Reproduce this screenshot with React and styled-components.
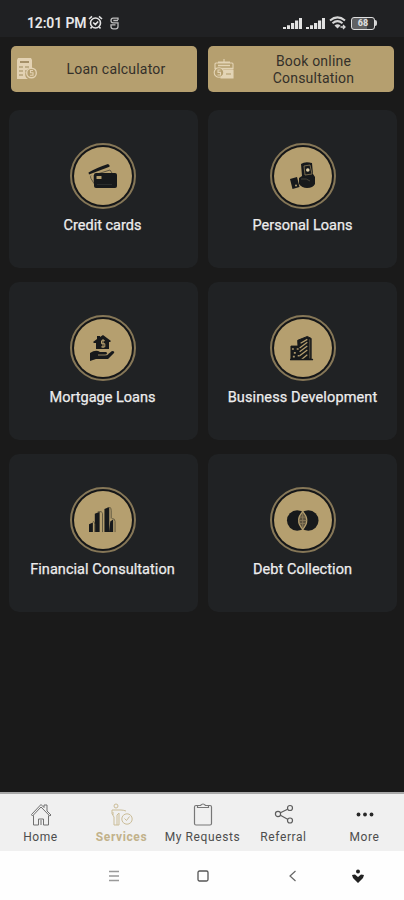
import React from "react";
import styled, { createGlobalStyle } from "styled-components";

const gold = "#b59f6f";
const ink = "#17191b";

const GlobalStyle = createGlobalStyle`
  * { box-sizing: border-box; }
  body { margin: 0; background: #1a1a1a; font-family: Roboto, "Liberation Sans", sans-serif; }
  svg { display: block; flex: none; }
`;
const Screen = styled.div`
  width: 404px; height: 900px; display: flex; flex-direction: column;
  overflow: hidden; background: #1a1a1a;
`;
const StatusBar = styled.header`
  height: 37px; flex: none; display: flex; align-items: center; justify-content: space-between;
  padding: 9px 27px 0 27px; background: #202123; color: #e8e8e8;
`;
const StatusGroup = styled.div`
  display: flex; align-items: center; gap: ${(p) => p.$gap}px;
`;
const Clock = styled.span`
  font-size: 14px; line-height: 18px; font-weight: 600; letter-spacing: -0.15px; white-space: nowrap;
`;
const GlyphSlot = styled.span`
  margin-left: 5px;
`;
const Actions = styled.div`
  display: grid; grid-template-columns: 186px 186px; gap: 11px; padding: 9px 0 0 11px;
`;
const ActionButton = styled.button`
  height: 46px; border: 0; border-radius: 5px; background: ${gold}; color: #34302a;
  display: flex; align-items: center; padding: 0 7px 0 5px; font-family: inherit;
`;
const ActionText = styled.span`
  flex: 1; text-align: center; font-size: 14px; line-height: 17px; letter-spacing: 0.2px;
  padding: 1px 0 0 5px;
`;
const Services = styled.main`
  flex: 1; display: grid; grid-template-columns: 189px 189px; grid-auto-rows: 158px;
  gap: 14px 10px; padding: 18px 0 0 9px; align-content: start;
`;
const Card = styled.section`
  border-radius: 10px; background: #202224; display: flex; flex-direction: column;
  align-items: center; padding: 33px 2px 0 0;
  &:nth-child(even) { padding-right: 0; }
`;
const Medallion = styled.div`
  width: 66px; height: 66px; border: 2px solid #867757; border-radius: 50%;
  display: grid; place-items: center;
`;
const Disc = styled.div`
  width: 58px; height: 58px; border-radius: 50%; background: ${gold};
  display: grid; place-items: center; box-shadow: 0 0 0 1.5px #151617;
`;
const CardTitle = styled.h2`
  margin: 7px 0 0; color: #ededed; font-size: 14.5px; line-height: 20px; font-weight: 400;
  letter-spacing: ${(p) => p.$tracking}px; white-space: nowrap; -webkit-text-stroke: 0.25px #ededed;
`;
const NavBar = styled.nav`
  height: 59px; flex: none; border-top: 2px solid #a9a9a9; background: #f0f0f0;
  display: grid; grid-template-columns: repeat(5, 81px); justify-content: center;
`;
const NavItem = styled.a`
  display: flex; flex-direction: column; align-items: center; padding: 9px 0 0 1px;
  color: ${(p) => (p.$active ? "#c2b28b" : "#4d4d4d")};
`;
const NavLabel = styled.span`
  font-size: 12px; line-height: 16px; margin-top: 3px; letter-spacing: 0.6px; white-space: nowrap;
  font-weight: ${(p) => (p.$active ? 700 : 400)};
`;
const SystemBar = styled.footer`
  height: 49px; flex: none; background: #fefefe; display: flex; align-items: center;
  padding: 1px 0 0 107px;
`;
const SystemButton = styled.span`
  width: 14px; display: grid; place-items: center; margin-right: ${(p) => p.$after}px;
`;

const Alarm = () => (
  <svg width="15" height="16" viewBox="0 0 15 16" fill="none" stroke="#e5e5e5" strokeWidth="1.6">
    <circle cx="7.5" cy="8" r="5" /><path d="M1 4 4 1.3M11 1.3 14 4M5.2 7.5l2.2 2 2.7-3M3.7 12 2.5 13.5M11.3 12l1.2 1.5" />
  </svg>
);
const StatusGlyph = () => (
  <svg width="9" height="13" viewBox="0 0 9 13" fill="none" stroke="#bdbdbd" strokeWidth="1.3">
    <path d="M8 3V1.2H3.2Q1 1.2 1 3.5T3.2 5.8H8V9.5Q8 11.8 5.7 11.8H3.3Q1 11.8 1 9.5V7.8h4.5M3.3 3.5H8" />
  </svg>
);
const Signal = () => (
  <svg width="20" height="13" viewBox="0 0 20 13" fill="#e2e2e2">
    <path d="M0 10h3v2H0zM4 8.3h3V12H4zM8 6h3.2v6H8zM12 3.5h3.2V12H12zM16 1h3v11H16z" />
  </svg>
);
const Wifi = () => (
  <svg width="18" height="14" viewBox="0 0 18 14" fill="none" stroke="#d6d6d6">
    <path d="M1 4.5Q8.5-1.8 16 4.5M3.5 7.3Q8.5 3 13.5 7.3" strokeWidth="2" />
    <path d="M5.5 9.5Q8.5 7 11.5 9.5L8.5 12.5Z" fill="#d6d6d6" stroke="none" />
    <path d="M11.5 11h4.5m-2-2 2 2-2 2" strokeWidth="1.3" />
  </svg>
);
const BatteryBox = styled.div`
  display: flex; align-items: center; margin-left: 1px;
`;
const BatteryBody = styled.div`
  width: 24px; height: 13px; border: 1.5px solid #dedede; border-radius: 3px;
  display: grid; place-items: center; font-size: 9px; line-height: 9px; font-weight: 800;
  color: #dedede; background: linear-gradient(90deg, #606163 0 66%, #333436 66%);
`;
const BatteryTip = styled.i`
  width: 2px; height: 6px; border-radius: 0 2px 2px 0; background: #d2d2d2;
`;

const LoanIcon = () => (
  <svg width="21" height="22" viewBox="0 0 21 22" fill="none">
    <path d="M2 0h13l1 2v8a6 6 0 0 0-4 11H1V2Z" fill="#e3d2b3" />
    <path d="M4 3h9v2H4z" fill="#a59068" /><path d="M3 9h4m2 0h4M3 13h4m2 0h2M3 17h4" stroke="#b5a27a" strokeWidth="1.4" />
    <circle cx="15.5" cy="15" r="4.8" fill={gold} stroke="#e3d2b3" strokeWidth="1.4" />
    <path d="M17 12.5h-2.5v2.3H17v2.5h-3" stroke="#e3d2b3" strokeWidth="1.1" />
  </svg>
);
const ConsultIcon = () => (
  <svg width="22" height="22" viewBox="0 0 22 22" fill="none" stroke="#e3d4b5" strokeWidth="1.1">
    <path d="M5 4h12M11 1v3M2 11V6q0-1 1-1h16q1 0 1 1v5" />
    <path d="M8 12h12v8H8z" fill="#e3d4b5" /><path d="M5 7.5h12M2 10.5h18" strokeWidth="1.6" />
    <circle cx="6" cy="14.5" r="4.8" fill={gold} /><path d="M7.5 12H5v2.4h2.5V17h-3" />
    <path d="M13 16h5" stroke={gold} />
  </svg>
);
const CardsIcon = () => (
  <svg width="30" height="26" viewBox="0 0 30 26">
    <path d="M.5 9.5Q8 5 20 1l1.5 1.2v1.5L1 11.5Z" fill={ink} />
    <path d="M3 12.5q-1 1 0 3l3 5V12l16-5 2 3" fill="none" stroke="#605744" strokeWidth="1" />
    <path d="M6 12q0-2 2-2h19q2 0 2 2v11q0 2-2 2H8q-2 0-2-2Z" fill={ink} />
    <rect x="8.5" y="13" width="5" height="3" rx=".5" fill={gold} /><path d="M9 21.5h15" stroke="#292c2c" />
  </svg>
);
const PersonalIcon = () => (
  <svg width="27" height="28" viewBox="0 0 27 28" fill={ink}>
    <path d="m1 17 7-2 2.5 10-7 2Z" /><circle cx="7" cy="23.5" r="1" fill={gold} />
    <path d="M12 2q4-3 11-1l1 11 2 3v7q-2 4-8 4-5 0-8-4V16l3-2Z" />
    <path d="m15 4 6-1 2 9-7 1Z" fill="none" stroke="#8d7c58" strokeWidth=".8" /><circle cx="18.8" cy="8" r="1.8" fill="#e0d0a8" />
    <path d="M12 17q6-1 9 2" fill="none" stroke="#454339" />
  </svg>
);
const MortgageIcon = () => (
  <svg width="27" height="28" viewBox="0 0 27 28" fill={ink}>
    <path d="M4 8 8 5V2h3v1l3-2 8 6-1 1h-1v7H7V9H5Z" />
    <path d="M15.8 6.7h-3.3v3h3.3v3.2h-3.6M14 5v9" stroke={gold} fill="none" />
    <path d="M1 19q6-4 10-1h6q2 1 0 3h1l5-4q3 0 2 2l-6 6H7l-6 2Z" />
    <path d="M9 21h7q2 0 3-1" stroke="#938361" fill="none" strokeWidth="1.1" />
  </svg>
);
const BusinessIcon = () => (
  <svg width="25" height="28" viewBox="0 0 26 28" fill="none" stroke={ink}>
    <path d="M2 12h7v14H1V12ZM8 6l10-4 4 2v22H9Z" fill={ink} />
    <path d="M11 9l7-4m-8 9 8-6m-8 10 8-6m-8 10 8-6m-6 10 6-5" stroke={gold} strokeWidth="1.3" />
    <path d="M20.5 5v20" stroke="#5b523f" strokeWidth="1" /><path d="M2 15h2m3 0h2M4 19h2m2 3h2M3 23h2" stroke="#a9956b" strokeWidth="1.7" />
    <path d="M0 26h24" strokeWidth="1.5" />
  </svg>
);
const CityIcon = () => (
  <svg width="28" height="27" viewBox="0 0 29 28" fill={ink}>
    <path d="M0 18 4 16v10H0ZM6 7l5-2v21H6ZM16 2l5-2v26h-5ZM22 15l3-2v13h-4Z" />
    <path d="M4 15q2 0 2 3v8M9 5q5-1 5 2v19M19 0q4-1 4 4v8M24 12q3 0 3 3v11" fill="none" stroke="#5f563f" strokeWidth="1" />
  </svg>
);
const DebtIcon = () => (
  <svg width="33" height="23" viewBox="0 0 34 23">
    <circle cx="11.5" cy="11.5" r="10.5" fill={ink} /><circle cx="23" cy="11.5" r="10.5" fill={ink} />
    <path d="M17.2 1.5Q7.4 11.5 17.2 21.5 27 11.5 17.2 1.5Z" fill={gold} />
    <path d="M17.2 3.3Q9.8 11.5 17.2 19.7 24.6 11.5 17.2 3.3Z" fill="#5c523e" />
    <path d="M14 8h6m-7 3.5h8m-7 3h6M17.2 4v15" stroke="#88795a" />
  </svg>
);
const HomeIcon = () => (
  <svg width="22" height="23" viewBox="0 0 22 23" fill="none" stroke="#707070" strokeWidth="1">
    <path d="M1.5 11.5 11 1.5l3 3V2h3v6l4 4-1.2 1L11 4 2.5 13ZM3.5 12.5V22h5v-6h5v6h5v-9.5M11 17v5" />
  </svg>
);
const ServiceIcon = () => (
  <svg width="23" height="23" viewBox="0 0 23 23" fill="none" stroke="#cbbd98">
    <circle cx="6" cy="3" r="2" /><path d="M2 7q-1 4 2 7v8M2 7h9q2 0 5 1M7 22V12l2-2v12H4M3 9v3" />
    <circle cx="17" cy="16" r="5.2" /><path d="M14.5 15.5l2 2 3-4" />
  </svg>
);
const ClipboardIcon = () => (
  <svg width="20" height="23" viewBox="0 0 20 23" fill="none" stroke="#777" strokeWidth="1.2">
    <rect x="1.5" y="2.5" width="17" height="19.5" rx="1.5" /><path d="M4.5 4.5V2.5h3q2.5-3 5 0h3v2Z" fill="#f0f0f0" />
  </svg>
);
const ShareIcon = () => (
  <svg width="20" height="23" viewBox="0 0 20 23" fill="none" stroke="#5d5d5d" strokeWidth="1.2">
    <circle cx="4" cy="11" r="2.6" /><circle cx="16" cy="5" r="2.5" /><circle cx="16" cy="17.5" r="2.5" />
    <path d="m6.4 9.8 7.2-3.6M6.4 12.3l7.2 4" />
  </svg>
);
const MoreIcon = () => (
  <svg width="20" height="23" viewBox="0 0 20 23" fill="#282828">
    <circle cx="3.5" cy="11.5" r="1.9" /><circle cx="10" cy="11.5" r="1.9" /><circle cx="16.5" cy="11.5" r="1.9" />
  </svg>
);

const cards = [
  ["Credit cards", CardsIcon, 0], ["Personal Loans", PersonalIcon, 0],
  ["Mortgage Loans", MortgageIcon, 0], ["Business Development", BusinessIcon, 0.13],
  ["Financial Consultation", CityIcon, 0.05], ["Debt Collection", DebtIcon, 0.05],
];
const tabs = [
  ["Home", HomeIcon], ["Services", ServiceIcon, true], ["My Requests", ClipboardIcon],
  ["Referral", ShareIcon], ["More", MoreIcon],
];

export default function App() {
  return (
    <Screen>
      <GlobalStyle />
      <StatusBar>
        <StatusGroup $gap={2}><Clock>12:01 PM</Clock><Alarm /><GlyphSlot><StatusGlyph /></GlyphSlot></StatusGroup>
        <StatusGroup $gap={3}><Signal /><Signal /><Wifi /><BatteryBox><BatteryBody>68</BatteryBody><BatteryTip /></BatteryBox></StatusGroup>
      </StatusBar>
      <Actions>
        <ActionButton><LoanIcon /><ActionText>Loan calculator</ActionText></ActionButton>
        <ActionButton><ConsultIcon /><ActionText>Book online<br />Consultation</ActionText></ActionButton>
      </Actions>
      <Services>
        {cards.map(([title, Icon, tracking]) => (
          <Card key={title}>
            <Medallion><Disc><Icon /></Disc></Medallion>
            <CardTitle $tracking={tracking}>{title}</CardTitle>
          </Card>
        ))}
      </Services>
      <NavBar>
        {tabs.map(([name, Icon, active]) => (
          <NavItem key={name} $active={active}><Icon /><NavLabel $active={active}>{name}</NavLabel></NavItem>
        ))}
      </NavBar>
      <SystemBar>
        <SystemButton $after={75}>
          <svg width="12" height="12" viewBox="0 0 12 12" stroke="#999" strokeWidth="1.3"><path d="M1 1.5h10M1 6h10M1 10.5h10" /></svg>
        </SystemButton>
        <SystemButton $after={76}>
          <svg width="12" height="12" viewBox="0 0 12 12" fill="none" stroke="#555" strokeWidth="1.3"><rect x="1" y="1" width="10" height="10" rx="1.5" /></svg>
        </SystemButton>
        <SystemButton $after={51}>
          <svg width="10" height="12" viewBox="0 0 10 12" fill="none" stroke="#666" strokeWidth="1.2"><path d="M7.5 1 2 6l5.5 5" /></svg>
        </SystemButton>
        <SystemButton $after={0}>
          <svg width="14" height="14" viewBox="0 0 14 14" fill="#222"><circle cx="7" cy="2.5" r="2" /><path d="m1 6 3-.5 3 2.5 3-2.5 3 .5-1 3-5 5-5-5Z" /></svg>
        </SystemButton>
      </SystemBar>
    </Screen>
  );
}
